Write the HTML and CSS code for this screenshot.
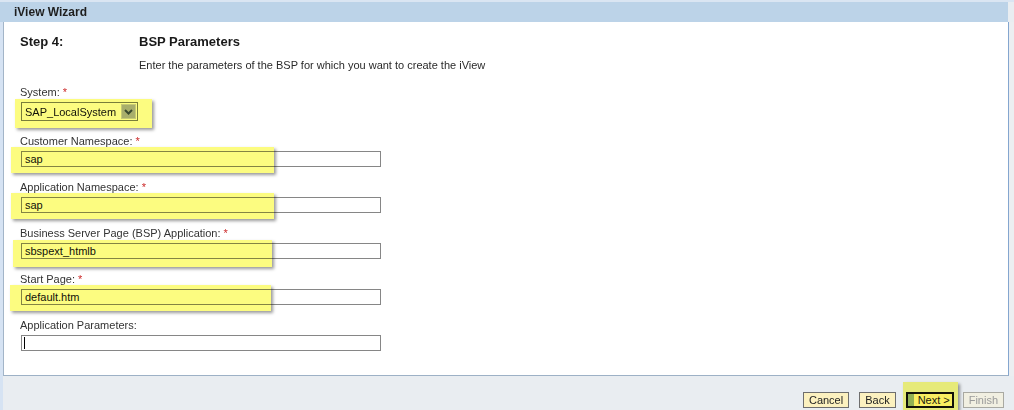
FILE: index.html
```html
<!DOCTYPE html>
<html>
<head>
<meta charset="utf-8">
<link rel="stylesheet" href="styles.css">
</head>
<body>
<div class="page">
  <div class="topline"></div>
  <div class="titlebar">iView Wizard</div>
  <div class="main">
    <div class="panel">
      <div class="head">
        <div class="step">Step 4:</div>
        <div class="stitle">BSP Parameters</div>
        <div></div>
        <div class="desc">Enter the parameters of the BSP for which you want to create the iView</div>
      </div>
      <div class="fields">
        <div class="field">
          <div class="label">System: <span class="req">*</span></div>
          <div class="ctl">
            <div class="select">
              <span class="seltext">SAP_LocalSystem</span>
              <span class="selbtn"><svg width="9" height="6" viewBox="0 0 9 6"><path d="M1 1 L4.5 4.5 L8 1" fill="none" stroke="#3a4a5c" stroke-width="2"/></svg></span>
            </div>
            <div class="hl hl-sys"></div>
          </div>
        </div>
        <div class="field">
          <div class="label">Customer Namespace: <span class="req">*</span></div>
          <div class="ctl">
            <div class="input">sap</div>
            <div class="hl hl-a"></div>
          </div>
        </div>
        <div class="field">
          <div class="label">Application Namespace: <span class="req">*</span></div>
          <div class="ctl">
            <div class="input">sap</div>
            <div class="hl hl-a"></div>
          </div>
        </div>
        <div class="field">
          <div class="label">Business Server Page (BSP) Application: <span class="req">*</span></div>
          <div class="ctl">
            <div class="input">sbspext_htmlb</div>
            <div class="hl hl-b"></div>
          </div>
        </div>
        <div class="field">
          <div class="label">Start Page: <span class="req">*</span></div>
          <div class="ctl">
            <div class="input">default.htm</div>
            <div class="hl hl-c"></div>
          </div>
        </div>
        <div class="field">
          <div class="label">Application Parameters:</div>
          <div class="ctl">
            <div class="input"><span class="caret"></span></div>
          </div>
        </div>
      </div>
    </div>
    <div class="rightgap"></div>
  </div>
  <div class="footer">
    <button class="btn">Cancel</button>
    <button class="btn">Back</button>
    <span class="nextwrap">
      <button class="btn next"><span class="nextbar"></span>Next &gt;</button>
      <span class="hl hl-next"></span>
    </span>
    <button class="btn disabled">Finish</button>
  </div>
</div>
</body>
</html>
```

FILE: styles.css
```css
html, body {
  margin: 0;
  padding: 0;
}
body {
  width: 1014px;
  height: 410px;
  overflow: hidden;
  font-family: "Liberation Sans", Arial, sans-serif;
  background: #e9edf1;
}
.page {
  position: relative;
  height: 410px;
  border-left: 3px solid #d6e3f3;
  box-sizing: border-box;
}
.topline {
  height: 2px;
  background: #dae5f2;
  margin-left: -3px;
}
.titlebar {
  height: 20px;
  margin-left: -3px;
  margin-right: 6px;
  background: #bcd3e8;
  color: #1e1e1e;
  font-size: 12px;
  font-weight: bold;
  line-height: 20px;
  padding-left: 14px;
}
.main {
  display: flex;
}
.panel {
  flex: 0 0 1006px;
  box-sizing: border-box;
  height: 354px;
  background: #fff;
  border-left: 1px solid #a3b5c8;
  border-right: 1px solid #84a6cf;
  border-bottom: 1px solid #9db1c6;
  padding: 12px 16px 0 16px;
}
.rightgap {
  flex: 1;
  background: #eceef1;
}
.head {
  display: grid;
  grid-template-columns: 119px 1fr;
  row-gap: 9px;
}
.step, .stitle {
  font-size: 13px;
  font-weight: bold;
  line-height: 16px;
  color: #1a1a1a;
}
.desc {
  font-size: 11px;
  line-height: 13px;
  color: #2a2a2a;
}
.fields {
  margin-top: 14px;
  display: flex;
  flex-direction: column;
  gap: 14px;
}
.label {
  font-size: 11px;
  line-height: 13px;
  color: #333;
  margin-bottom: 3px;
}
.req {
  color: #cc2a2a;
}
.ctl {
  position: relative;
  margin-left: 1px;
}
.select {
  width: 117px;
  height: 19px;
  box-sizing: border-box;
  border: 1px solid #7a7f74;
  background: #fff;
  display: flex;
  align-items: center;
  justify-content: space-between;
  padding: 0 1px 0 3px;
}
.seltext {
  font-size: 11px;
  color: #111;
}
.selbtn {
  width: 15px;
  height: 15px;
  box-sizing: border-box;
  background: #aab0d6;
  border: 1px solid #c9cce8;
  display: flex;
  align-items: center;
  justify-content: center;
}
.input {
  width: 360px;
  height: 16px;
  box-sizing: border-box;
  border: 1px solid #868686;
  background: #fff;
  font-size: 11px;
  line-height: 14px;
  padding-left: 3px;
  color: #111;
  position: relative;
}
.caret {
  position: absolute;
  left: 2px;
  top: 1px;
  width: 1px;
  height: 12px;
  background: #000;
}
.hl {
  position: absolute;
  background: #fcfc80;
  mix-blend-mode: multiply;
  box-shadow: 2px 2px 3px rgba(0, 0, 0, 0.4);
  pointer-events: none;
}
.hl-sys { left: -6px; top: -3px; width: 137px; height: 29px; }
.hl-a { left: -10px; top: -4px; width: 263px; height: 26px; }
.hl-b { left: -8px; top: -3px; width: 259px; height: 27px; }
.hl-c { left: -11px; top: -4px; width: 261px; height: 26px; }
.footer {
  display: flex;
  justify-content: flex-end;
  align-items: flex-start;
  gap: 10px;
  padding: 16px 10px 0 0;
}
.btn {
  font-family: "Liberation Sans", Arial, sans-serif;
  font-size: 11px;
  height: 16px;
  line-height: 14px;
  padding: 0 5px;
  margin: 0;
  border: 1px solid #6e6e6e;
  background: #fcf1bf;
  color: #222;
  box-sizing: border-box;
  border-radius: 0;
}
.nextwrap {
  position: relative;
  display: inline-flex;
}
.next {
  border: 2px solid #111;
  width: 48px;
  line-height: 12px;
  padding: 0 0 0 10px;
  position: relative;
  text-align: left;
}
.nextbar {
  position: absolute;
  left: 0;
  top: 0;
  bottom: 0;
  width: 6px;
  background: #93b3a8;
}
.hl-next { left: -3px; top: -10px; width: 55px; height: 28px; }
.disabled {
  background: #f1efe1;
  border-color: #a9a9a2;
  color: #9a9a9a;
  margin-left: -1px;
}
```
